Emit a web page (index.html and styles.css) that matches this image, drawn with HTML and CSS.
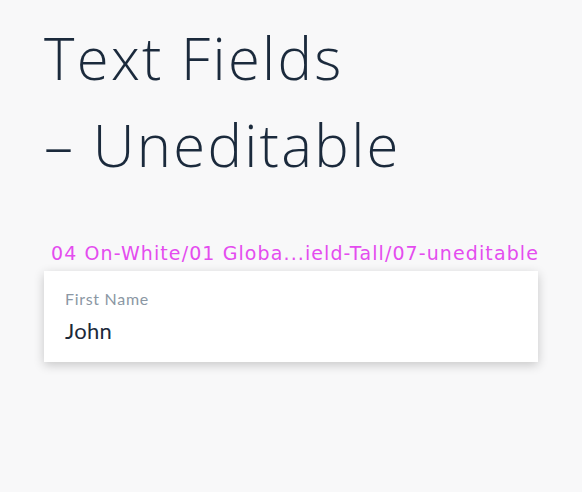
FILE: index.html
```html
<!DOCTYPE html>
<html>
<head>
<meta charset="utf-8">
<link rel="stylesheet" href="styles.css">
</head>
<body>
<div class="page">
  <h1 class="title">Text Fields<br>– Uneditable</h1>
  <div class="label">04 On-White/01 Globa...ield-Tall/07-uneditable</div>
  <div class="card">
    <div class="field-label">First Name</div>
    <div class="field-value">John</div>
  </div>
</div>
</body>
</html>
```
FILE: styles.css
```css
html, body {
  margin: 0;
  padding: 0;
  background: #f8f8f9;
}
.page {
  width: 582px;
  height: 492px;
  padding: 14px 0 0 44px;
  box-sizing: border-box;
  font-family: Lato, "Noto Sans", sans-serif;
}
.title {
  margin: 0;
  font-family: "Open Sans", sans-serif;
  font-weight: 300;
  font-size: 58px;
  line-height: 87px;
  color: #1b2a3c;
  letter-spacing: 2.3px;
}
.label {
  margin: 54px 0 0 7px;
  font-family: "DejaVu Sans", sans-serif;
  font-size: 19px;
  line-height: 22px;
  color: #e44cef;
  letter-spacing: 1.1px;
  white-space: nowrap;
}
.card {
  margin-top: 7px;
  width: 494px;
  height: 91px;
  background: #fff;
  box-shadow: 0 3px 10px rgba(0,0,0,0.2);
  box-sizing: border-box;
  padding: 18px 21px 0;
}
.field-label {
  font-size: 16px;
  line-height: 20px;
  color: #8b97a4;
  letter-spacing: 0.7px;
}
.field-value {
  margin-top: 8px;
  font-size: 22px;
  line-height: 28px;
  color: #1c2a3a;
  letter-spacing: 0.3px;
}
```
